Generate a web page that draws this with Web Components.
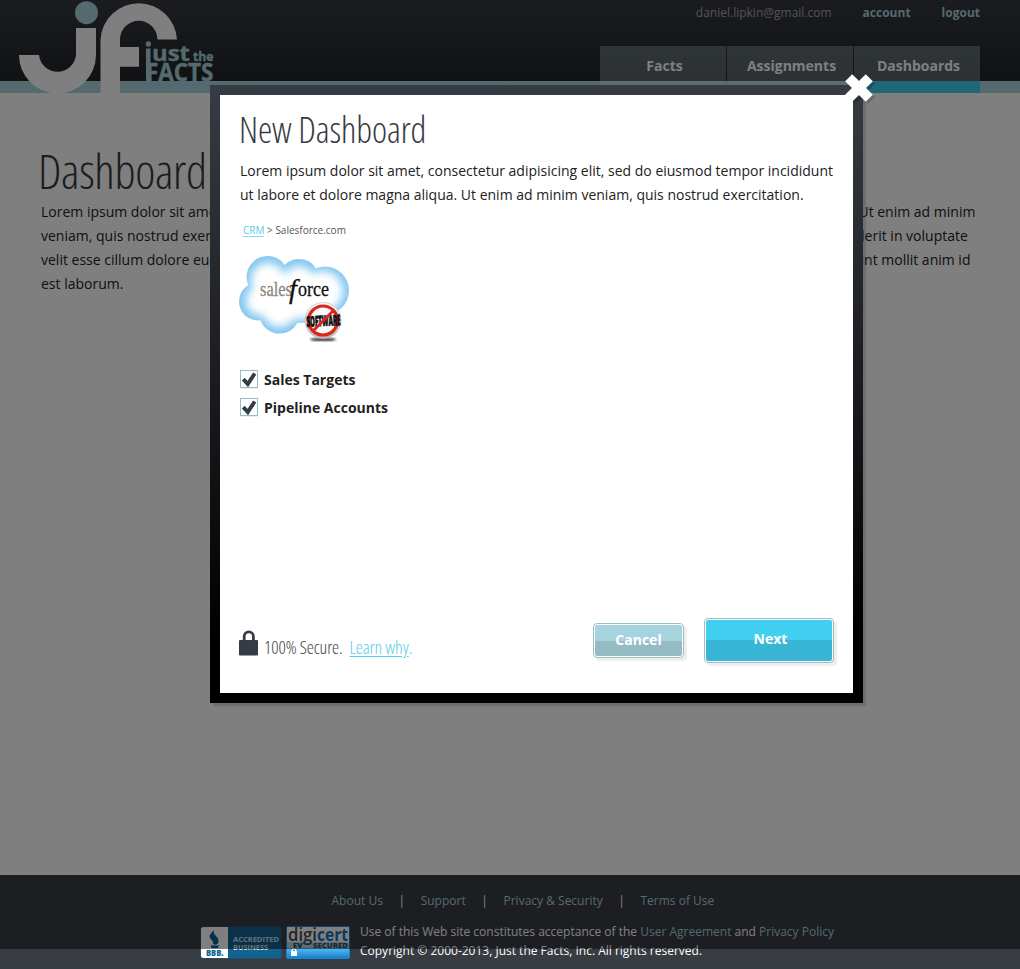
<!DOCTYPE html>
<html lang="en">
<head>
<meta charset="utf-8">
<title>Just the Facts</title>
<style>
html,body{margin:0;padding:0}
body{width:1020px;height:969px;overflow:hidden;background:#fff;font-family:"Open Sans",sans-serif;color:#222}
</style>
</head>
<body>
<jf-app></jf-app>
<script>
const define = (name, html) => {
  const tpl = document.createElement('template');
  tpl.innerHTML = html;
  customElements.define(name, class extends HTMLElement {
    constructor(){ super(); this.attachShadow({mode:'open'}).append(tpl.content.cloneNode(true)); }
  });
};

define('jf-logo', `<style>:host{display:block;width:220px;height:93px}svg{display:block}text{font-family:"Open Sans",sans-serif;font-weight:700;fill:#a8d4dc;stroke:#a8d4dc;stroke-width:.4}</style>
<svg width="220" height="93" viewBox="0 0 220 93">
<g fill="#fff"><path d="M76 28H96V55A38.500 38.500 0 0 1 19 55H39A18.600 18.600 0 0 0 76 55Z"/>
<path d="M100.500 93V39.500A38.300 38.300 0 0 1 177 39.500H157.400A18.700 18.700 0 0 0 120 39.500V47H139V66.700H120V93Z"/></g>
<circle cx="86.500" cy="12.700" r="11.500" fill="#a8d4dc"/>
<rect x="146" y="48.500" width="4.500" height="33" fill="#a8d4dc"/><circle cx="148.400" cy="44" r="2.700" fill="#a8d4dc"/>
<text x="152" y="61" font-size="21.500" textLength="38" lengthAdjust="spacingAndGlyphs">ust</text>
<text x="193" y="61" font-size="12.500" textLength="20.500" lengthAdjust="spacingAndGlyphs">the</text>
<text x="146" y="80.800" font-size="24.500" textLength="67.500" lengthAdjust="spacingAndGlyphs">FACTS</text>
</svg>`);

define('nav-tab', `<style>:host{display:block;box-sizing:border-box;width:126px;height:47px;padding-left:3px;text-align:center;font:bold 14px/40px "Open Sans",sans-serif;color:#fff;background:linear-gradient(#5f696e,#5a6266 35px,#b4dbe0 35px)}
:host([active]){background:linear-gradient(#5f696e,#5a6266 35px,#3aceee 35px)}span{display:block}</style><span><slot></slot></span>`);

define('app-header', `<style>:host{display:block;position:relative;height:93px;background:linear-gradient(#36383f,#222428 81px,#a8d4dc 81px)}
.row{display:flex;justify-content:space-between;width:980px;height:93px}
.right{display:flex;flex-direction:column;justify-content:space-between;align-items:flex-end}
.user{display:flex;gap:31px;font-size:12px;line-height:25px;color:#a8a8a8}b{color:#a8d4dc}nav{display:flex;gap:1px}</style>
<div class="row"><jf-logo></jf-logo><div class="right"><div class="user"><span>daniel.lipkin@gmail.com</span><b>account</b><b>logout</b></div>
<nav><nav-tab>Facts</nav-tab><nav-tab>Assignments</nav-tab><nav-tab active>Dashboards</nav-tab></nav></div></div>`);

define('page-intro', `<style>:host{display:block;padding:43px 0 0 41px;height:739px}
h1{margin:0 0 0 -3px;font-size:48px;line-height:70px;height:64px;font-weight:300;font-stretch:75%;letter-spacing:-.35px;color:#373b43;white-space:nowrap}
p{margin:0;font-size:14px;line-height:24px;white-space:nowrap}</style>
<h1>Dashboard</h1><p>Lorem ipsum dolor sit amet, consectetur adipisicing elit, sed do eiusmod tempor incididunt ut labore et dolore magna aliqua. Ut enim ad minim<br>veniam, quis nostrud exercitation ullamco laboris nisi ut aliquip ex ea commodo consequat. Duis aute irure dolor in reprehenderit in voluptate<br>velit esse cillum dolore eu fugiat nulla pariatur. Excepteur sint occaecat cupidatat non proident, sunt in culpa qui officia deserunt mollit anim id<br>est laborum.</p>`);

define('bbb-seal', `<style>:host{display:block;width:82px;height:33px}svg{display:block}text{font-family:"Open Sans",sans-serif;font-weight:700}</style>
<svg width="82" height="33"><rect x=".5" y=".5" width="81" height="32" rx="3" fill="#12638f"/><path d="M3.500 1H28V32H3.500Q1 32 1 29.500V3.500Q1 1 3.500 1Z" fill="#fff"/>
<path d="M14.500 3C11 9 21 11 18 17C17 19 15 19 13 18C15 15 7 12 10.500 8C11.500 6 14 5 14.500 3ZM10.500 19.500H19L18 22H11.500Z" fill="#0f6396"/>
<text x="6" y="30" font-size="8" style="font-weight:800" textLength="17.500" lengthAdjust="spacingAndGlyphs" fill="#0f6396">BBB.</text>
<text x="33" y="15.500" font-size="7" textLength="46" lengthAdjust="spacingAndGlyphs" fill="#c8e0ee">ACCREDITED</text><text x="33" y="24" font-size="7" textLength="35" lengthAdjust="spacingAndGlyphs" fill="#c8e0ee">BUSINESS</text></svg>`);

define('digicert-seal', `<style>:host{display:block;width:64px;height:33px}svg{display:block}text{font-family:"Open Sans",sans-serif}</style>
<svg width="64" height="33"><defs><linearGradient id="b" x2="0" y2="1"><stop stop-color="#55b9f0"/><stop offset="1" stop-color="#1680d2"/></linearGradient></defs><rect width="64" height="33" rx="2" fill="#1f83ce"/><path d="M1 1H63V17H1Z" fill="#fff"/><path d="M1 16H63V22.500H1Z" fill="#aedcf5"/><path d="M1 22.500H63V30Q63 32 61 32H3Q1 32 1 30Z" fill="url(#b)"/>
<text x="2" y="14.500" font-size="17.500" font-weight="600" fill="#444b55" textLength="29" lengthAdjust="spacingAndGlyphs">digi</text><text x="31" y="14.500" font-size="17.500" font-weight="700" fill="#1775be" textLength="31" lengthAdjust="spacingAndGlyphs">cert</text>
<text x="7" y="21.500" font-size="7.500" font-weight="800" fill="#3c4655" textLength="9.500" lengthAdjust="spacingAndGlyphs">EV</text><text x="27" y="21.500" font-size="7.500" font-weight="800" fill="#3c4655" textLength="35" lengthAdjust="spacingAndGlyphs">SECURED</text>
<rect x="5" y="25" width="6" height="5" fill="#fff"/><path d="M6.300 25.500V24.200a1.700 1.700 0 0 1 3.400 0V25.500" fill="none" stroke="#fff" stroke-width="1.200"/></svg>`);

define('app-footer', `<style>:host{display:block;height:94px;background:#383c43;color:#fff;font-size:12px;white-space:nowrap}
.links{display:flex;padding:17px 0 0 331.500px;line-height:18px;color:#a8d4dc}
.links i{font-style:normal;color:#fff;width:37.800px;text-align:center}
.legal{display:flex;padding:16px 0 0 200px}.legal digicert-seal{margin-left:4px}.legal p{margin:-4px 0 0 10px;line-height:19px}a{color:#a8d4dc}</style>
<div class="links"><span>About Us</span><i>|</i><span>Support</span><i>|</i><span>Privacy &amp; Security</span><i>|</i><span>Terms of Use</span></div>
<div class="legal"><bbb-seal></bbb-seal><digicert-seal></digicert-seal><p><span>Use of this Web site constitutes acceptance of the <a>User Agreement</a> and <a>Privacy Policy</a></span><br><span>Copyright © 2000-2013, Just the Facts, Inc. All rights reserved.</span></p></div>`);

define('salesforce-logo', `<style>:host{display:block;width:112px;height:88px}svg{display:block}</style>
<svg width="112" height="88" viewBox="238 255 112 88"><defs>
<clipPath id="c"><circle cx="267.500" cy="277" r="21"/><circle cx="299" cy="279" r="20"/><circle cx="325" cy="290.500" r="24"/><circle cx="258" cy="301.500" r="19"/><circle cx="279.500" cy="313" r="20.500"/><circle cx="301" cy="303" r="20"/><rect x="262" y="275" width="60" height="38"/></clipPath>
<filter id="f" x="-30%" y="-30%" width="160%" height="160%"><feGaussianBlur stdDeviation="4.500"/></filter><filter id="s"><feGaussianBlur stdDeviation=".8"/></filter>
<linearGradient id="g" x2="0" y2="1"><stop stop-color="#fff"/><stop offset="1" stop-color="#bbb"/></linearGradient></defs>
<g clip-path="url(#c)"><rect x="238" y="255" width="112" height="88" fill="#83c7ef"/>
<g filter="url(#f)" fill="#fff"><circle cx="268" cy="280" r="17"/><circle cx="299" cy="282" r="16"/><circle cx="323" cy="291" r="20"/><circle cx="260" cy="301" r="14"/><circle cx="279.500" cy="310" r="17"/><circle cx="301" cy="302" r="17"/><rect x="262" y="277" width="60" height="34"/></g></g>
<text y="296" font-family="Liberation Serif,serif" font-size="21.500"><tspan x="260" fill="#8c8682" stroke="#8c8682" stroke-width=".3" textLength="32" lengthAdjust="spacingAndGlyphs">sales</tspan><tspan x="289" y="297.500" font-size="28" font-style="italic" fill="#111" stroke="#111" stroke-width=".3">f</tspan><tspan x="298" y="296" fill="#111" stroke="#111" stroke-width=".3" textLength="31" lengthAdjust="spacingAndGlyphs">orce</tspan></text>
<ellipse cx="323" cy="339.500" rx="13" ry="1.600" fill="#333" filter="url(#s)"/>
<circle cx="323" cy="320.500" r="18" fill="url(#g)" stroke="#b5b5b5" stroke-width=".6"/><circle cx="323" cy="320.500" r="14.500" fill="#fafafa" stroke="#d9271d" stroke-width="3.200"/>
<text x="306.500" y="326" transform="rotate(-3 323 321)" font-family="Open Sans,sans-serif" font-weight="800" font-size="14.500" textLength="34" lengthAdjust="spacingAndGlyphs" fill="#111" stroke="#111" stroke-width=".8">SOFTWARE</text>
<path d="M313 331L333 311" stroke="#d9271d" stroke-width="2.800"/></svg>`);

define('check-row', `<style>:host{display:flex;align-items:center;gap:6px;height:20px;font-weight:bold;font-size:14px;white-space:nowrap}svg{flex:none}</style>
<svg width="18" height="19"><rect x="1" y="2" width="17" height="17" fill="#eee"/><rect x=".5" y=".5" width="17" height="17" fill="#fff" stroke="#94bdc7"/><path d="M3.300 9.200L7.800 14L14.700 3.500" fill="none" stroke="#373b43" stroke-width="3.900"/></svg><span><slot></slot></span>`);

define('glossy-button', `<style>:host{display:flex;box-sizing:border-box;width:91px;height:35px;border:1px solid #9abfc7;border-radius:4px;padding:1px;background:#fff;box-shadow:3px 3px 0 #eee;font:bold 14px/29px "Open Sans",sans-serif;color:#fff;text-align:center}
span{flex:1;border-radius:2px;background:linear-gradient(#a5d3de 50%,#95bcc4 50%)}
:host([primary]){width:130px;height:45px;line-height:37px}:host([primary]) span{padding-left:3px;background:linear-gradient(#40cff0 20px,#39b6d5 20px)}</style><span><slot></slot></span>`);

define('modal-dialog', `<style>:host{display:block;position:absolute;left:210px;top:85px;width:653px;height:618px;box-sizing:border-box;padding:10px;background:linear-gradient(#373b43,#000 90%);box-shadow:3px 3px 0 rgba(0,0,0,.12)}
.panel{box-sizing:border-box;height:598px;background:#fff;padding:13px 19px 30px 20px;display:flex;flex-direction:column}
h2{margin:0 0 0 -1px;font-size:36px;line-height:44px;font-weight:300;font-stretch:75%;letter-spacing:-.1px;color:#373b43;white-space:nowrap}
p{margin:7px 0 0;font-size:14px;line-height:24px;white-space:nowrap}
.crumb{margin:15px 0 0 3px;font-size:10px;line-height:16px;color:#555}.crumb a{color:#4fcfec;border-bottom:1px solid #7fdcf2;display:inline-block;line-height:12px}.why{color:#4fcfec;text-decoration:underline;text-underline-offset:2px}
salesforce-logo{margin:17px 0 0 -2px}.checks{display:flex;flex-direction:column;gap:8px;margin-top:26px}
.bottom{margin-top:auto;display:flex;align-items:center}.secure{display:flex;align-items:center;margin:13px 0 0 -1px;font-size:18px;font-weight:300;font-stretch:75%;letter-spacing:-.1px;color:#444;white-space:nowrap}
.secure svg{margin:-9px 6px 0 0}.why{margin-left:7px}.buttons{margin-left:auto;display:flex;align-items:center;gap:20px}
.close{position:absolute;left:634px;top:-12px}</style>
<div class="panel"><h2>New Dashboard</h2>
<p>Lorem ipsum dolor sit amet, consectetur adipisicing elit, sed do eiusmod tempor incididunt<br>ut labore et dolore magna aliqua. Ut enim ad minim veniam, quis nostrud exercitation.</p>
<div class="crumb"><a>CRM</a> &gt; Salesforce.com</div><salesforce-logo></salesforce-logo>
<div class="checks"><check-row>Sales Targets</check-row><check-row>Pipeline Accounts</check-row></div>
<div class="bottom"><div class="secure"><svg width="19" height="26"><rect y="10" width="19" height="15.500" rx="1" fill="#373b43"/><path d="M5.200 11V6.500a4.600 4.600 0 0 1 9.200 0V11" fill="none" stroke="#373b43" stroke-width="2.800"/></svg><span>100% Secure.</span><span class="why">Learn why</span><span style="color:#4fcfec">.</span></div>
<div class="buttons"><glossy-button>Cancel</glossy-button><glossy-button primary>Next</glossy-button></div></div></div>
<svg class="close" width="34" height="34"><g stroke-width="10"><path d="M7.500 7.500L27.500 27.500M27.500 7.500L7.500 27.500" stroke="#000" stroke-opacity=".18"/><path d="M4.700 4.700L25.300 25.300M25.300 4.700L4.700 25.300" stroke="#fff"/></g></svg>`);

define('jf-app', `<style>:host{display:block;position:relative;width:1020px;height:969px}.shade{position:absolute;left:0;top:0;width:1020px;height:949px;background:rgba(0,0,0,.5)}</style>
<app-header></app-header><page-intro></page-intro><app-footer></app-footer><div class="shade"></div><modal-dialog></modal-dialog>`);
</script>
</body>
</html>
